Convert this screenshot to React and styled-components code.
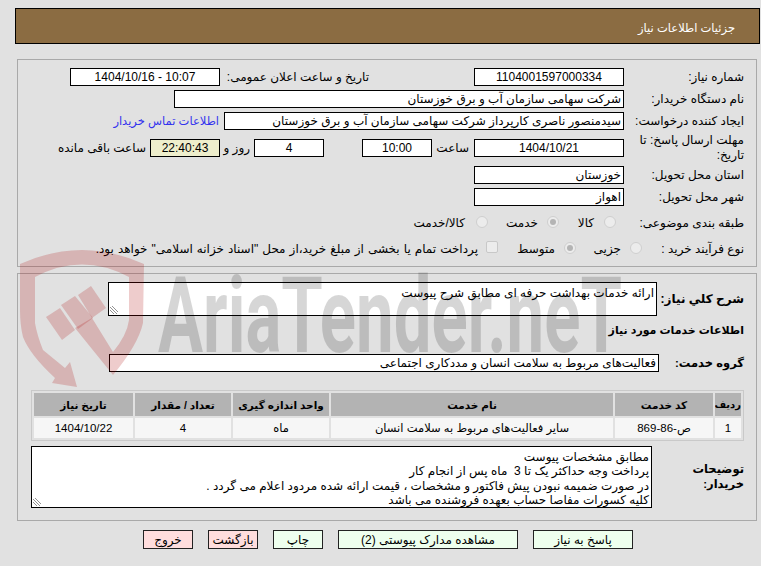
import React from 'react';
import styled, { createGlobalStyle } from 'styled-components';

const GlobalStyle = createGlobalStyle`
  html, body {
    margin: 0;
    padding: 0;
    height: 100%;
    overflow: hidden;
    background: #e1e1e1;
  }
`;

const Page = styled.div`
  position: relative;
  width: 761px;
  height: 566px;
  padding: 8px 1px 0 15px;
  box-sizing: border-box;
  direction: rtl;
  font-family: "Liberation Sans", "DejaVu Sans", sans-serif;
  font-size: 12px;
  color: #000;
`;

const Title = styled.div`
  height: 34px;
  padding-right: 24px;
  line-height: 38px;
  border: 1px solid #000;
  background: #8b6c42;
  color: #fff;
  font-size: 11.5px;
`;

const Panel = styled.div`
  width: 740px;
  box-sizing: border-box;
  margin-right: 3px;
  margin-top: ${p => p.$top}px;
  height: ${p => p.$height}px;
  padding: 8px 12px 0 0;
  border: 1px solid #a9a9a9;
  display: flex;
  flex-direction: column;
`;

const Row = styled.div`
  display: flex;
  align-items: center;
  height: ${p => p.$height || 18}px;
  margin-bottom: ${p => p.$gap ?? 4}px;
`;

const DescriptionRow = styled(Row)`
  margin-top: 5px;
`;

const Label = styled.div`
  width: ${p => p.$width || 120}px;
  flex: none;
  line-height: 15px;
`;

const BoldLabel = styled(Label)`
  font-weight: bold;
  font-size: ${p => p.$size || 11.5}px;
`;

const Field = styled.div`
  width: ${p => p.$width}px;
  height: 18px;
  flex: none;
  margin-right: ${p => p.$right || 0}px;
  box-sizing: border-box;
  border: 1px solid #000;
  background: ${p => p.$bg || '#fff'};
  line-height: 17px;
  padding: 0 2px;
  text-align: ${p => (p.$center ? 'center' : 'right')};
  white-space: nowrap;
  overflow: hidden;
`;

const Num = styled.span`
  direction: ltr;
  unicode-bidi: isolate;
`;

const Note = styled.div`
  flex: none;
  width: ${p => (p.$width ? `${p.$width}px` : 'auto')};
  margin-right: ${p => p.$right || 0}px;
  word-spacing: ${p => p.$spread || 0}px;
  white-space: nowrap;
`;

const BuyerLink = styled.a`
  flex: none;
  margin-right: 5px;
  color: #3333ee;
  font-size: 11.5px;
  text-decoration: none;
`;

const Radio = styled.span`
  flex: none;
  width: 12px;
  height: 12px;
  margin-right: ${p => p.$right || 0}px;
  margin-left: ${p => p.$after || 9}px;
  margin-top: -3px;
  box-sizing: border-box;
  border-radius: 50%;
  border: 1px solid #cfcfcf;
  background: #ececec;
  display: flex;
  align-items: center;
  justify-content: center;

  &::after {
    content: '';
    display: ${p => (p.$on ? 'block' : 'none')};
    width: 6px;
    height: 6px;
    border-radius: 50%;
    background: #b4b4b4;
  }
`;

const Check = styled.span`
  flex: none;
  width: 12px;
  height: 12px;
  margin-right: ${p => p.$right}px;
  margin-left: 8px;
  margin-top: -4px;
  box-sizing: border-box;
  border: 1px solid #c8c8c8;
  border-radius: 2px;
  background: #ececec;
`;

const Area = styled.div`
  position: relative;
  width: ${p => p.$width}px;
  height: ${p => p.$height}px;
  flex: none;
  box-sizing: border-box;
  border: 1px solid #000;
  background: #fff;
  padding: 3px 2px 0;
  line-height: 14.4px;
  white-space: nowrap;
  overflow: hidden;
`;

const Grip = styled.svg`
  position: absolute;
  left: 1px;
  bottom: 1px;
  width: 8px;
  height: 8px;
`;

const ServiceTable = styled.table`
  width: 713px;
  table-layout: fixed;
  border-collapse: separate;
  border-spacing: 2px;
  border: 1px solid #c9c9c9;
  flex: none;

  th {
    height: 23px;
    padding: 0;
    background: #b3b3b3;
    font-size: 10.5px;
    font-weight: bold;
    overflow: hidden;
  }

  th:first-child {
    font-size: 10px;
  }

  td {
    height: 20px;
    padding: 0;
    background: #f6f6f6;
    text-align: center;
    font-size: 11.5px;
  }
`;

const Actions = styled.div`
  display: flex;
  gap: 15px;
  margin: 9px 127px 0 0;
`;

const ActionButton = styled.button`
  width: ${p => p.$width || 50}px;
  height: 19px;
  padding: 0;
  box-sizing: border-box;
  border: 1px solid #222;
  background: ${p => (p.$danger ? '#ffdddd' : '#eeffee')};
  font: inherit;
  color: #000;
`;

const Watermark = styled.svg`
  position: absolute;
  left: 0;
  top: 0;
  width: 761px;
  height: 566px;
  pointer-events: none;
`;

const ResizeGrip = () => (
  <Grip viewBox="0 0 8 8">
    <path d="M0 1 7 8M0 4 4 8M2 0 8 6" stroke="#777" strokeWidth="0.8" fill="none" />
  </Grip>
);

const columns = [
  ['ردیف', 26],
  ['کد خدمت', 98],
  ['نام خدمت', 282],
  ['واحد اندازه گیری', 96],
  ['تعداد / مقدار', 96],
  ['تاریخ نیاز', 99],
];

const App = () => (
  <Page>
    <GlobalStyle />
    <Title>جزئیات اطلاعات نیاز</Title>
    <Panel $top={15} $height={208}>
      <Row>
        <Label>شماره نیاز:</Label>
        <Field $width={150} $center>1104001597000334</Field>
        <Note $right={105} $width={149}>تاریخ و ساعت اعلان عمومی:</Note>
        <Field $width={150} $center><Num>1404/10/16 - 10:07</Num></Field>
      </Row>
      <Row>
        <Label>نام دستگاه خریدار:</Label>
        <Field $width={450}>شرکت سهامی سازمان آب و برق خوزستان</Field>
      </Row>
      <Row $gap={9}>
        <Label>ایجاد کننده درخواست:</Label>
        <Field $width={400}>سیدمنصور ناصری کارپرداز شرکت سهامی سازمان آب و برق خوزستان</Field>
        <BuyerLink href="#">اطلاعات تماس خریدار</BuyerLink>
      </Row>
      <Row $gap={9}>
        <Label>مهلت ارسال پاسخ: تا تاریخ:</Label>
        <Field $width={150} $center>1404/10/21</Field>
        <Note $right={5} $width={37}>ساعت</Note>
        <Field $width={70} $center>10:00</Field>
        <Field $width={70} $center $right={38}>4</Field>
        <Note $right={4} $width={30}>روز و</Note>
        <Field $width={70} $center $bg="#eeeecc">22:40:43</Field>
        <Note $right={4}>ساعت باقی مانده</Note>
      </Row>
      <Row>
        <Label>استان محل تحویل:</Label>
        <Field $width={150}>خوزستان</Field>
      </Row>
      <Row $gap={8}>
        <Label>شهر محل تحویل:</Label>
        <Field $width={150}>اهواز</Field>
      </Row>
      <Row $gap={8}>
        <Label>طبقه بندی موضوعی:</Label>
        <Radio $right={8} $after={10} />
        <Note $width={17}>کالا</Note>
        <Radio $on $right={18} />
        <Note $width={33}>خدمت</Note>
        <Radio $right={17} $after={11} />
        <Note>کالا/خدمت</Note>
      </Row>
      <Row>
        <Label $width={102}>نوع فرآیند خرید :</Label>
        <Radio />
        <Note $width={29}>جزیی</Note>
        <Radio $on $right={16} />
        <Note $width={36}>متوسط</Note>
        <Check $right={21} />
        <Note $spread={0.7}>پرداخت تمام یا بخشی از مبلغ خرید،از محل "اسناد خزانه اسلامی" خواهد بود.</Note>
      </Row>
    </Panel>
    <Panel $top={6} $height={248}>
      <Row $height={34} $gap={6}>
        <BoldLabel $width={87} $size={12}>شرح کلي نياز:</BoldLabel>
        <Area $width={549} $height={34}>
          ارائه خدمات بهداشت حرفه ای مطابق شرح پیوست
          <ResizeGrip />
        </Area>
      </Row>
      <Row $height={17} $gap={15}>
        <BoldLabel $width={200} $size={11}>اطلاعات خدمات مورد نياز</BoldLabel>
      </Row>
      <Row $gap={18}>
        <BoldLabel $width={85}>گروه خدمت:</BoldLabel>
        <Field $width={550}>فعالیت‌های مربوط به سلامت انسان و مددکاری اجتماعی</Field>
      </Row>
      <ServiceTable>
        <colgroup>
          {columns.map(([name, width]) => <col key={name} width={width} />)}
        </colgroup>
        <thead>
          <tr>{columns.map(([name]) => <th key={name}>{name}</th>)}</tr>
        </thead>
        <tbody>
          <tr>
            <td>1</td>
            <td>ص-86-869</td>
            <td>سایر فعالیت‌های مربوط به سلامت انسان</td>
            <td>ماه</td>
            <td>4</td>
            <td>1404/10/22</td>
          </tr>
        </tbody>
      </ServiceTable>
      <DescriptionRow $height={62} $gap={0}>
        <BoldLabel $width={92}>توضیحات خریدار:</BoldLabel>
        <Area $width={621} $height={62}>
          مطابق مشخصات پیوست<br />
          پرداخت وجه حداکثر یک تا 3&nbsp; ماه پس از انجام کار<br />
          در صورت ضمیمه نبودن پیش فاکتور و مشخصات ، قیمت ارائه شده مردود اعلام می گردد .<br />
          کلیه کسورات مفاصا حساب بعهده فروشنده می باشد
          <ResizeGrip />
        </Area>
      </DescriptionRow>
    </Panel>
    <Actions>
      <ActionButton $width={100}>پاسخ به نیاز</ActionButton>
      <ActionButton $width={180}>مشاهده مدارک پیوستی (2)</ActionButton>
      <ActionButton>چاپ</ActionButton>
      <ActionButton $danger>بازگشت</ActionButton>
      <ActionButton $danger>خروج</ActionButton>
    </Actions>
    <Watermark viewBox="0 0 761 566">
      <g fill="rgb(170,0,0)" fillOpacity="0.2">
        <path d="M20 264Q82 236 144 264L143 323Q138 345 113 375L75 328 92 318 113 352Q127 335 129 320L129 277Q82 252 35 277L35 323Q37 335 43 350L65 368 70 362 77 387 52 383 55 378Q30 355 23 337Q20 325 20 310Z" />
        <path d="M46 317 60 308 75 330 62 340Z" />
        <path d="M61 305 75 296 93 318 78 329Z" />
        <path d="M78 295 91 286 106 308 92 318Z" />
      </g>
      <text
        x="158"
        y="352"
        direction="ltr"
        fontFamily="Roboto, sans-serif"
        fontWeight="700"
        fontSize="106"
        fill="#000"
        fillOpacity="0.16"
        textLength="464"
        lengthAdjust="spacingAndGlyphs"
      >
        AriaTender.neT
      </text>
    </Watermark>
  </Page>
);

export default App;
